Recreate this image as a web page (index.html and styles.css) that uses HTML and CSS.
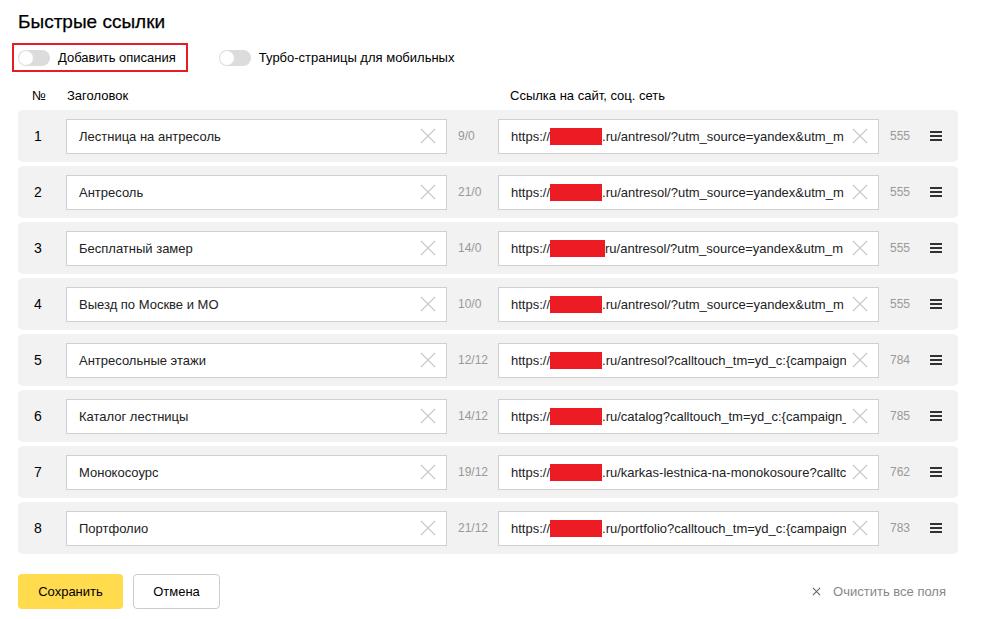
FILE: index.html
```html
<!DOCTYPE html>
<html lang="ru">
<head>
  <meta charset="UTF-8">
  <title>Быстрые ссылки</title>
  <link rel="stylesheet" href="styles.css">
</head>
<body>
  <div class="panel">
    <h1 class="title">Быстрые ссылки</h1>

    <div class="switches">
      <label class="switch switch-marked"><span class="track"><span class="knob"></span></span>Добавить описания</label>
      <label class="switch"><span class="track"><span class="knob"></span></span>Турбо-страницы для мобильных</label>
    </div>

    <div class="head">
      <span class="col-num">№</span>
      <span class="col-title">Заголовок</span>
      <span class="col-url">Ссылка на сайт, соц. сеть</span>
    </div>

    <ul class="links">
      <li class="link-row">
        <span class="num">1</span>
        <div class="field"><span class="value">Лестница на антресоль</span><svg class="clear" viewBox="0 0 16 16"><path d="M1 1L15 15M15 1L1 15"/></svg></div>
        <span class="count">9/0</span>
        <div class="field"><span class="value">https://<i class="hide"></i>.ru/antresol/?utm_source=yandex&amp;utm_m</span><svg class="clear" viewBox="0 0 16 16"><path d="M1 1L15 15M15 1L1 15"/></svg></div>
        <span class="count">555</span>
        <svg class="drag" viewBox="0 0 12 10"><path d="M0 1H12M0 5H12M0 9H12"/></svg>
      </li>
      <li class="link-row">
        <span class="num">2</span>
        <div class="field"><span class="value">Антресоль</span><svg class="clear" viewBox="0 0 16 16"><path d="M1 1L15 15M15 1L1 15"/></svg></div>
        <span class="count">21/0</span>
        <div class="field"><span class="value">https://<i class="hide"></i>.ru/antresol/?utm_source=yandex&amp;utm_m</span><svg class="clear" viewBox="0 0 16 16"><path d="M1 1L15 15M15 1L1 15"/></svg></div>
        <span class="count">555</span>
        <svg class="drag" viewBox="0 0 12 10"><path d="M0 1H12M0 5H12M0 9H12"/></svg>
      </li>
      <li class="link-row">
        <span class="num">3</span>
        <div class="field"><span class="value">Бесплатный замер</span><svg class="clear" viewBox="0 0 16 16"><path d="M1 1L15 15M15 1L1 15"/></svg></div>
        <span class="count">14/0</span>
        <div class="field"><span class="value">https://<i class="hide hide-wide"></i>ru/antresol/?utm_source=yandex&amp;utm_m</span><svg class="clear" viewBox="0 0 16 16"><path d="M1 1L15 15M15 1L1 15"/></svg></div>
        <span class="count">555</span>
        <svg class="drag" viewBox="0 0 12 10"><path d="M0 1H12M0 5H12M0 9H12"/></svg>
      </li>
      <li class="link-row">
        <span class="num">4</span>
        <div class="field"><span class="value">Выезд по Москве и МО</span><svg class="clear" viewBox="0 0 16 16"><path d="M1 1L15 15M15 1L1 15"/></svg></div>
        <span class="count">10/0</span>
        <div class="field"><span class="value">https://<i class="hide"></i>.ru/antresol/?utm_source=yandex&amp;utm_m</span><svg class="clear" viewBox="0 0 16 16"><path d="M1 1L15 15M15 1L1 15"/></svg></div>
        <span class="count">555</span>
        <svg class="drag" viewBox="0 0 12 10"><path d="M0 1H12M0 5H12M0 9H12"/></svg>
      </li>
      <li class="link-row">
        <span class="num">5</span>
        <div class="field"><span class="value">Антресольные этажи</span><svg class="clear" viewBox="0 0 16 16"><path d="M1 1L15 15M15 1L1 15"/></svg></div>
        <span class="count">12/12</span>
        <div class="field"><span class="value">https://<i class="hide"></i>.ru/antresol?calltouch_tm=yd_c:{campaign</span><svg class="clear" viewBox="0 0 16 16"><path d="M1 1L15 15M15 1L1 15"/></svg></div>
        <span class="count">784</span>
        <svg class="drag" viewBox="0 0 12 10"><path d="M0 1H12M0 5H12M0 9H12"/></svg>
      </li>
      <li class="link-row">
        <span class="num">6</span>
        <div class="field"><span class="value">Каталог лестницы</span><svg class="clear" viewBox="0 0 16 16"><path d="M1 1L15 15M15 1L1 15"/></svg></div>
        <span class="count">14/12</span>
        <div class="field"><span class="value">https://<i class="hide"></i>.ru/catalog?calltouch_tm=yd_c:{campaign_</span><svg class="clear" viewBox="0 0 16 16"><path d="M1 1L15 15M15 1L1 15"/></svg></div>
        <span class="count">785</span>
        <svg class="drag" viewBox="0 0 12 10"><path d="M0 1H12M0 5H12M0 9H12"/></svg>
      </li>
      <li class="link-row">
        <span class="num">7</span>
        <div class="field"><span class="value">Монокосоурс</span><svg class="clear" viewBox="0 0 16 16"><path d="M1 1L15 15M15 1L1 15"/></svg></div>
        <span class="count">19/12</span>
        <div class="field"><span class="value">https://<i class="hide"></i>.ru/karkas-lestnica-na-monokosoure?calltc</span><svg class="clear" viewBox="0 0 16 16"><path d="M1 1L15 15M15 1L1 15"/></svg></div>
        <span class="count">762</span>
        <svg class="drag" viewBox="0 0 12 10"><path d="M0 1H12M0 5H12M0 9H12"/></svg>
      </li>
      <li class="link-row">
        <span class="num">8</span>
        <div class="field"><span class="value">Портфолио</span><svg class="clear" viewBox="0 0 16 16"><path d="M1 1L15 15M15 1L1 15"/></svg></div>
        <span class="count">21/12</span>
        <div class="field"><span class="value">https://<i class="hide"></i>.ru/portfolio?calltouch_tm=yd_c:{campaign</span><svg class="clear" viewBox="0 0 16 16"><path d="M1 1L15 15M15 1L1 15"/></svg></div>
        <span class="count">783</span>
        <svg class="drag" viewBox="0 0 12 10"><path d="M0 1H12M0 5H12M0 9H12"/></svg>
      </li>
    </ul>

    <div class="actions">
      <button class="btn btn-save">Сохранить</button>
      <button class="btn btn-cancel">Отмена</button>
      <a href="#" class="reset"><svg viewBox="0 0 10 10"><path d="M1 1L9 9M9 1L1 9"/></svg>Очистить все поля</a>
    </div>
  </div>
</body>
</html>
```

FILE: styles.css
```css
* {
  margin: 0;
  padding: 0;
  box-sizing: border-box;
}

:root {
  --text: #000;
  --muted: #999;
  --row-bg: #f2f2f2;
  --border: #d0d0d0;
  --yellow: #ffdb4d;
  --mark: #e31e24;
}

body {
  background: #fff;
  color: var(--text);
  font-family: "Liberation Sans", Arial, sans-serif;
  font-size: 13px;
}

.panel {
  padding: 10px 23px 0 18px;
}

.title {
  font-size: 19px;
  font-weight: normal;
  line-height: 24px;
  height: 33px;
  -webkit-text-stroke: 0.25px #000;
}

/* toggles */
.switches {
  display: flex;
  align-items: center;
  gap: 25px;
  margin-left: -6px;
}

.switch {
  display: flex;
  align-items: center;
  gap: 8px;
  height: 29px;
  padding: 0 10px 0 4px;
  border: 2px solid transparent;
  cursor: pointer;
}

.switch-marked {
  border-color: var(--mark);
}

.track {
  width: 32px;
  height: 16px;
  border-radius: 8px;
  background: #dcdcdc;
  display: flex;
  align-items: center;
  padding-left: 1px;
}

.knob {
  width: 14px;
  height: 14px;
  border-radius: 50%;
  background: #fff;
}

/* table head */
.head {
  display: flex;
  align-items: center;
  height: 38px;
  padding-top: 8px;
}

.col-num {
  width: 48px;
  padding-left: 14px;
}

.col-title {
  width: 443px;
  padding-left: 1px;
}

.col-url {
  padding-left: 1px;
}

/* rows */
.links {
  list-style: none;
  display: flex;
  flex-direction: column;
  gap: 4px;
}

.link-row {
  display: flex;
  align-items: center;
  height: 52px;
  padding-left: 16px;
  background: var(--row-bg);
  border-radius: 5px;
}

.num {
  width: 32px;
  font-size: 14px;
}

.field {
  width: 381px;
  height: 35px;
  display: flex;
  align-items: center;
  padding: 0 10px 0 12px;
  background: #fff;
  border: 1px solid var(--border);
}

.value {
  flex: 1;
  white-space: nowrap;
  overflow: hidden;
  margin-right: 6px;
  color: #222;
}

.hide {
  display: inline-block;
  width: 52px;
  height: 17px;
  vertical-align: -4px;
  background: #ed1c24;
}

.hide-wide {
  width: 55px;
}

.clear {
  width: 16px;
  height: 16px;
  flex: none;
}

.clear path {
  stroke: #c8c8c8;
  stroke-width: 1.1;
  fill: none;
}

.count {
  width: 51px;
  padding-left: 11px;
  font-size: 12px;
  color: var(--muted);
}

.drag {
  width: 12px;
  height: 10px;
}

.drag path {
  stroke: #333;
  stroke-width: 2;
}

/* buttons */
.actions {
  display: flex;
  align-items: center;
  gap: 10px;
  margin-top: 20px;
}

.btn {
  height: 35px;
  border-radius: 4px;
  font-family: inherit;
  font-size: 13px;
  color: #000;
  cursor: pointer;
}

.btn-save {
  width: 105px;
  background: var(--yellow);
  border: none;
}

.btn-cancel {
  width: 87px;
  background: #fff;
  border: 1px solid #ccc;
}

.reset {
  margin-left: auto;
  margin-right: 12px;
  display: flex;
  align-items: center;
  gap: 12px;
  color: #888;
  text-decoration: none;
}

.reset svg {
  width: 9px;
  height: 9px;
}

.reset path {
  stroke: #666;
  stroke-width: 1.2;
}
```
